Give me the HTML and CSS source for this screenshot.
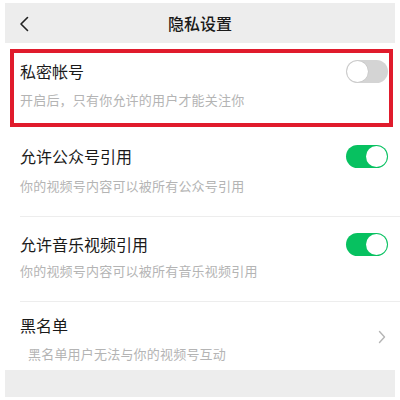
FILE: index.html
```html
<!DOCTYPE html>
<html lang="zh-CN">
<head>
<meta charset="utf-8">
<link rel="stylesheet" href="styles.css">
</head>
<body>
<div class="screen">
  <header class="topbar">
    <span class="back">
      <svg width="10" height="16" viewBox="0 0 10 16"><path d="M8.5 1.5 L2 8 L8.5 14.5" fill="none" stroke="#222" stroke-width="1.6" stroke-linecap="round" stroke-linejoin="round"/></svg>
    </span>
    <h1 class="title">隐私设置</h1>
    <span class="spacer"></span>
  </header>

  <div class="row row-private">
    <div class="line">
      <span class="label">私密帐号</span>
      <span class="switch"></span>
    </div>
    <div class="desc">开启后，只有你允许的用户才能关注你</div>
  </div>

  <div class="row row-a">
    <div class="line">
      <span class="label">允许公众号引用</span>
      <span class="switch on"></span>
    </div>
    <div class="desc">你的视频号内容可以被所有公众号引用</div>
  </div>

  <div class="row row-b">
    <div class="line">
      <span class="label">允许音乐视频引用</span>
      <span class="switch on"></span>
    </div>
    <div class="desc">你的视频号内容可以被所有音乐视频引用</div>
  </div>

  <div class="row row-c">
    <div class="line">
      <span class="label">黑名单</span>
    </div>
    <div class="line-sub">
      <span class="desc indent">黑名单用户无法与你的视频号互动</span>
      <svg class="chev" width="8" height="14" viewBox="0 0 8 14"><path d="M1.5 1.5 L6.5 7 L1.5 12.5" fill="none" stroke="#b5b5b5" stroke-width="1.4" stroke-linecap="round" stroke-linejoin="round"/></svg>
    </div>
  </div>

  <div class="footer-band"></div>
</div>
</body>
</html>
```

FILE: styles.css
```css
html, body {
  margin: 0;
  padding: 0;
  background: #ffffff;
}
body {
  width: 400px;
  height: 400px;
  overflow: hidden;
  font-family: "Noto Sans CJK SC", "Noto Sans", sans-serif;
  color: #1a1a1a;
}
.screen {
  padding-top: 3px;
}
.topbar {
  margin: 0 5px;
  height: 40px;
  background: #ededed;
  display: grid;
  grid-template-columns: 60px 1fr 60px;
  align-items: center;
}
.back {
  padding-left: 14px;
  display: flex;
  align-items: center;
  padding-top: 1px;
}
.title {
  margin: 0;
  text-align: center;
  font-size: 16px;
  font-weight: 500;
  line-height: 22px;
  color: #1a1a1a;
}
.row {
  padding: 0 12px 0 20px;
  border-bottom: 1px solid #ededed;
}
.line {
  display: flex;
  justify-content: space-between;
  align-items: center;
  height: 22px;
}
.label {
  font-size: 16px;
  line-height: 22px;
}
.desc {
  font-size: 13px;
  line-height: 18px;
  color: #b4b4b4;
  letter-spacing: 0.2px;
}
.row-private {
  margin: 6px 7px 0 10px;
  border: 4px solid #e01b2c;
  padding: 7px 1px 14px 6px;
}
.row-private .desc { margin-top: 9px; }
.row-a {
  padding-top: 18px;
  padding-bottom: 21px;
  margin-left: 20px;
  padding-left: 0;
}
.row-a .desc { margin-top: 10px; }
.row-b {
  padding-top: 16px;
  padding-bottom: 21px;
  margin-left: 20px;
  padding-left: 0;
}
.row-b .desc { margin-top: 7px; }
.row-c {
  padding-top: 12px;
  padding-bottom: 7px;
  border-bottom: none;
}
.line-sub {
  margin-top: 9px;
  display: flex;
  justify-content: space-between;
  align-items: center;
  height: 18px;
}
.indent {
  padding-left: 8px;
}
.chev {
  margin-right: 2px;
  margin-top: -34px;
}
.switch {
  width: 42px;
  height: 23px;
  border-radius: 12px;
  background: #d4d4d4;
  box-sizing: border-box;
  padding: 1px;
  display: flex;
  justify-content: flex-start;
}
.switch::after {
  content: "";
  width: 21px;
  height: 21px;
  border-radius: 50%;
  background: #ffffff;
  box-shadow: 0 0 0 0.5px #c4c4c4;
}
.switch.on {
  background: #07c160;
  justify-content: flex-end;
}
.switch.on::after {
  box-shadow: none;
}
.footer-band {
  margin: 0 5px;
  height: 27px;
  background: #ededed;
}
```
